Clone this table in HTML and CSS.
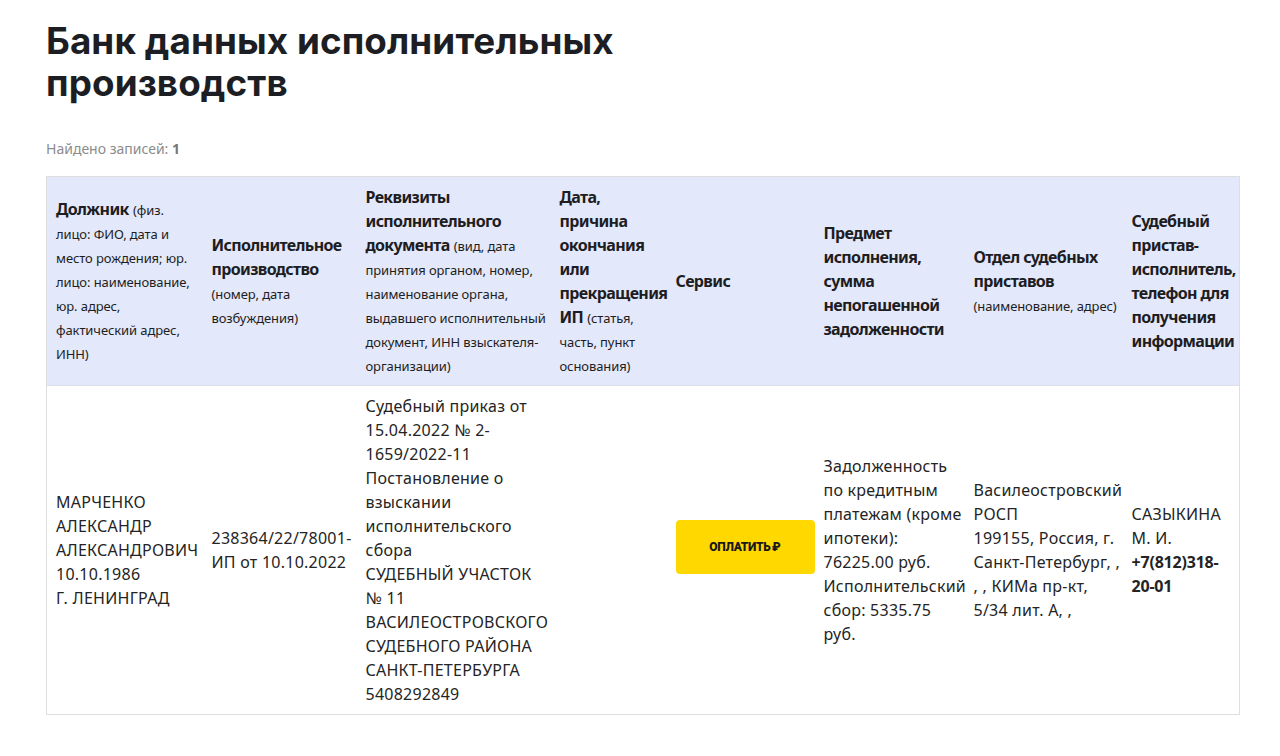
FILE: index.html
```html
<!DOCTYPE html>
<html lang="ru">
<head>
<meta charset="utf-8">
<title>Банк данных исполнительных производств</title>
<link rel="stylesheet" href="styles.css">
</head>
<body>
<main class="page">
  <h1 class="title">Банк данных исполнительных<br>производств</h1>
  <p class="found">Найдено записей: <b>1</b></p>
  <table class="results">
    <colgroup>
      <col class="c1"><col class="c2"><col class="c3"><col class="c4"><col class="c5"><col class="c6"><col class="c7"><col class="c8">
    </colgroup>
    <thead>
      <tr>
        <th><b>Должник</b> <small>(физ. лицо: ФИО, дата и место рождения; юр. лицо: наименование, юр. адрес, фактический адрес, ИНН)</small></th>
        <th><b>Исполнительное производство</b> <small>(номер, дата возбуждения)</small></th>
        <th><b>Реквизиты исполнительного документа</b> <small>(вид, дата принятия органом, номер, наименование органа, выдавшего исполнительный документ, ИНН взыскателя-организации)</small></th>
        <th><b>Дата, причина окончания или прекращения ИП</b> <small>(статья, часть, пункт основания)</small></th>
        <th><b>Сервис</b></th>
        <th><b>Предмет исполнения, сумма непогашенной задолженности</b></th>
        <th><b>Отдел судебных приставов</b> <small>(наименование, адрес)</small></th>
        <th><b>Судебный пристав-исполнитель, телефон для получения информации</b></th>
      </tr>
    </thead>
    <tbody>
      <tr>
        <td>МАРЧЕНКО АЛЕКСАНДР АЛЕКСАНДРОВИЧ 10.10.1986<br>Г. ЛЕНИНГРАД</td>
        <td>238364/22/78001-ИП от 10.10.2022</td>
        <td>Судебный приказ от 15.04.2022 № 2-1659/2022-11<br>Постановление о взыскании исполнительского сбора<br>СУДЕБНЫЙ УЧАСТОК № 11 ВАСИЛЕОСТРОВСКОГО СУДЕБНОГО РАЙОНА САНКТ-ПЕТЕРБУРГА<br>5408292849</td>
        <td></td>
        <td><a class="pay" href="#">ОПЛАТИТЬ&#8239;₽</a></td>
        <td>Задолженность по кредитным платежам (кроме ипотеки): 76225.00 руб.<br>Исполнительский сбор: 5335.75 руб.</td>
        <td>Василеостровский РОСП<br>199155, Россия, г. Санкт-Петербург, , , , КИМа пр-кт, 5/34 лит. А, ,</td>
        <td>САЗЫКИНА М. И.<br><b>+7(812)318-20-01</b></td>
      </tr>
    </tbody>
  </table>
</main>
</body>
</html>
```
FILE: styles.css
```css
* { box-sizing: border-box; }
html, body { margin: 0; padding: 0; background: #fff; }
body {
  font-family: "Noto Sans", "Roboto", "Liberation Sans", sans-serif;
  color: #222;
}
.page {
  padding: 20px 42px 0 46px;
}
.title {
  margin: 0;
  font-family: "Inter", "DejaVu Sans", sans-serif;
  font-weight: 700;
  font-size: 36.8px;
  line-height: 42px;
  color: #1d1e24;
  letter-spacing: 0.1px;
}
.found {
  margin: 35px 0 17px;
  font-size: 14px;
  line-height: 20px;
  color: #8c8c8c;
}
.found b { color: #777; }
.results {
  width: 1193px;
  border-collapse: collapse;
  table-layout: fixed;
  border: 1px solid #dedede;
}
.c1 { width: 156px; }
.c2 { width: 154px; }
.c3 { width: 194px; }
.c4 { width: 116px; }
.c5 { width: 148px; }
.c6 { width: 150px; }
.c7 { width: 158px; }
.c8 { width: 117px; }
.results th, .results td {
  text-align: left;
  vertical-align: middle;
  padding: 8px 2px 8px 9px;
  font-size: 16px;
  line-height: 24px;
}
.results thead tr {
  background: #e3e8fb;
  border-bottom: 1px solid #dcdfe8;
}
.results th { font-weight: 400; color: #1d1d22; }
.results th b { font-weight: 700; letter-spacing: -0.65px; }
.results th small { font-size: 13px; line-height: 1; letter-spacing: -0.1px; }
.results td { color: #242424; letter-spacing: 0.25px; }
.results td b { font-weight: 700; letter-spacing: -0.2px; }
.pay {
  display: flex;
  align-items: center;
  justify-content: center;
  width: 139px;
  height: 54px;
  margin-bottom: 7px;
  background: #ffd800;
  border-radius: 4px;
  color: #1a1a1a;
  text-decoration: none;
  font-family: "Roboto", "DejaVu Sans", sans-serif;
  font-weight: 900;
  font-size: 12px;
  letter-spacing: -0.3px;
}
```
